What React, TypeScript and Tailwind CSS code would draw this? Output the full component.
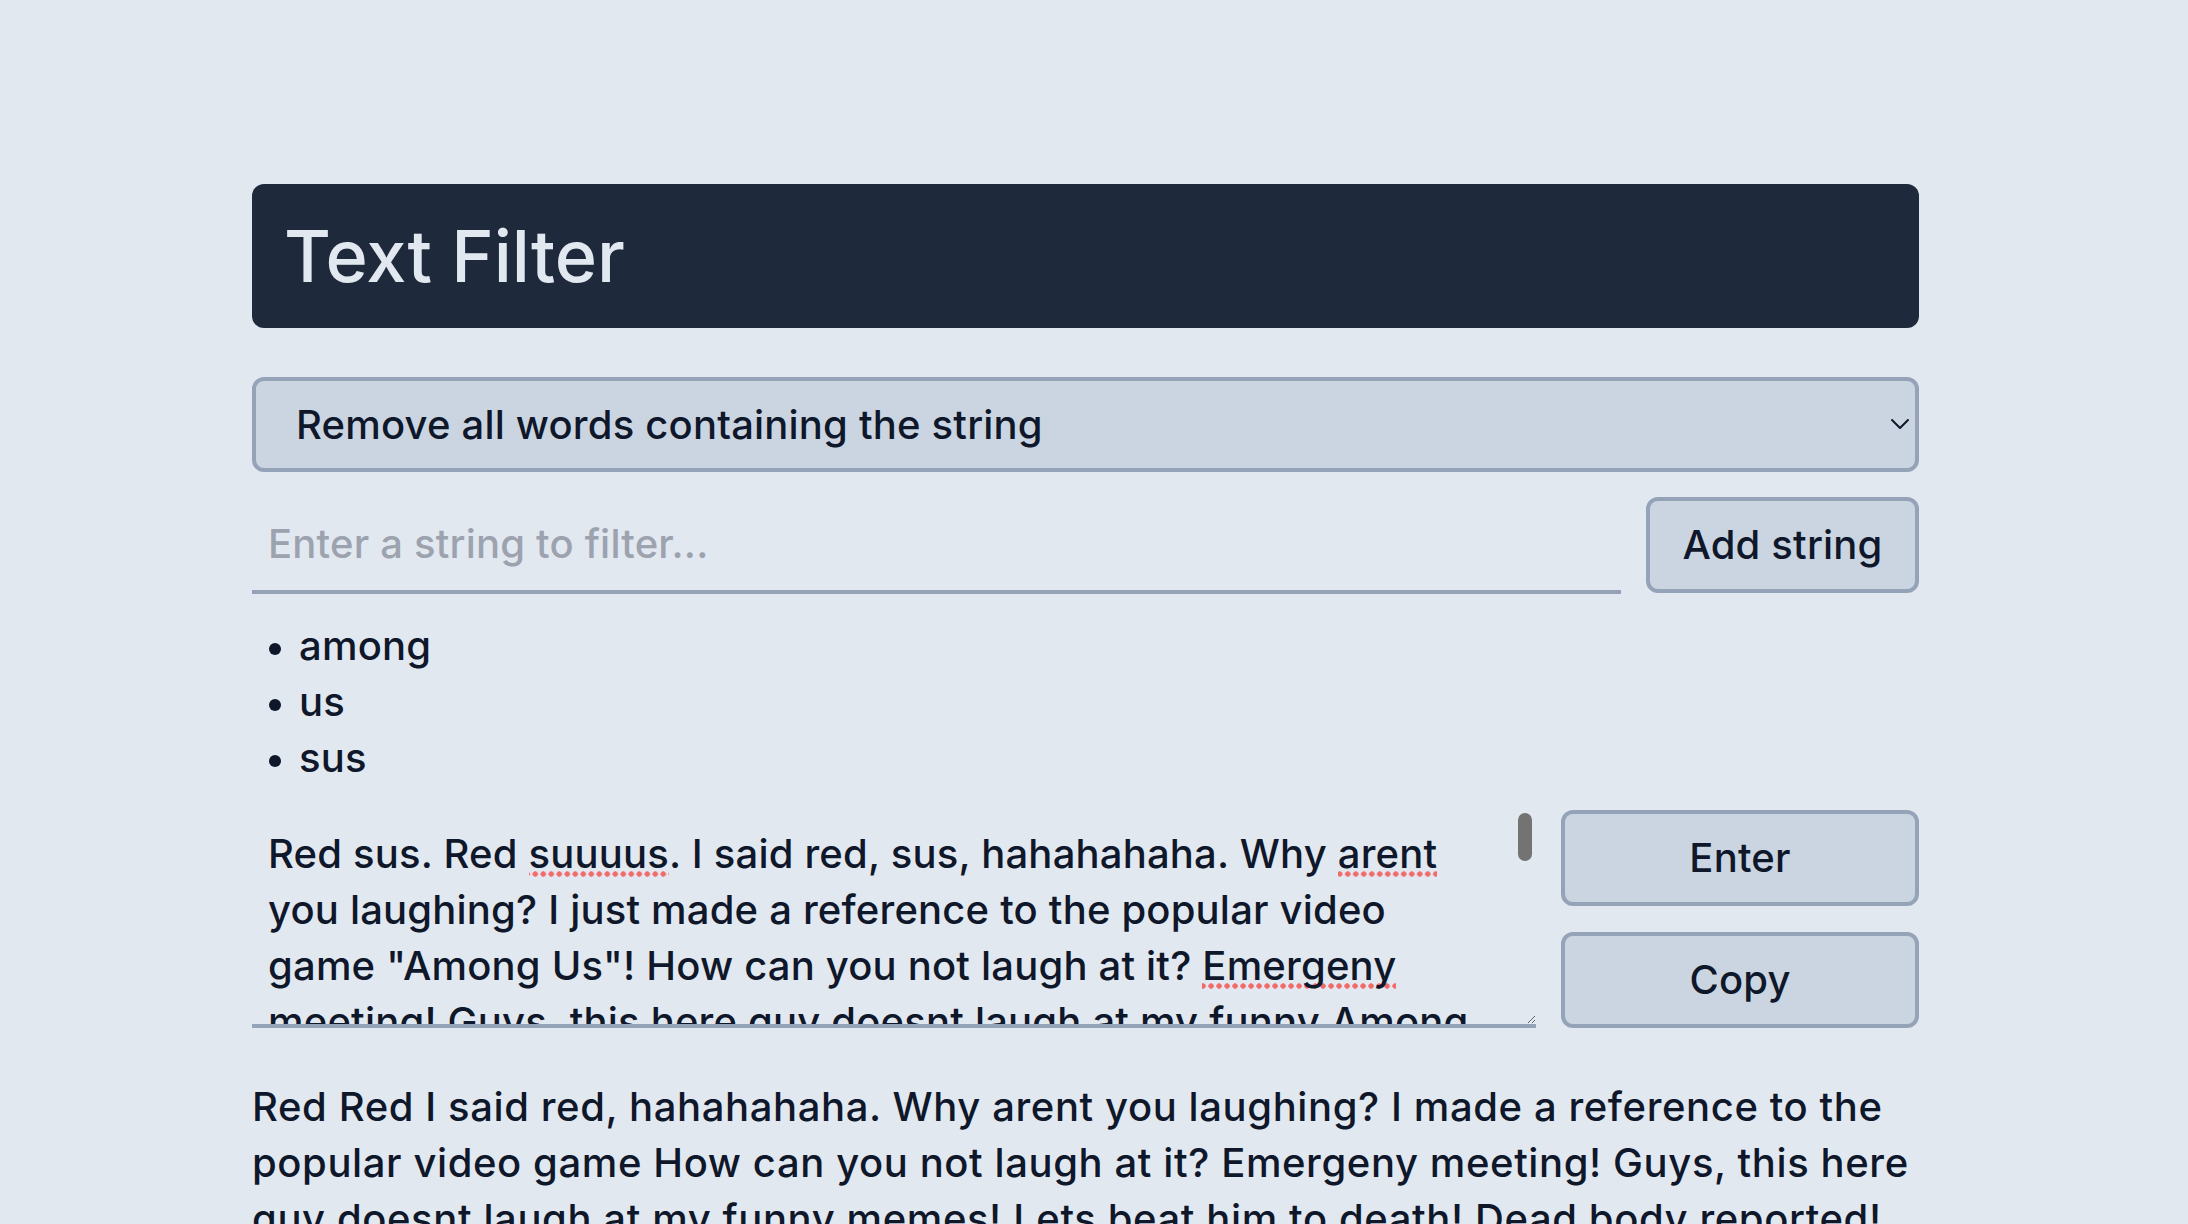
import React from "react";

const Bad = ({ children }: { children: React.ReactNode }) => (
  <span className="bg-[radial-gradient(circle,#f26a6a_2.4px,transparent_3px)] bg-[length:8px_8px] bg-bottom bg-repeat-x">
    {children}
  </span>
);

export default function App() {
  const items = ["among", "us", "sus"];
  return (
    <div className="min-h-screen bg-[#e2e8f0] font-['Inter','Open_Sans',sans-serif] font-medium text-[#0f172a] tracking-[0.012em]">
      <div className="ml-[252px] w-[1667px] pt-[184px] pb-[80px]">
        <header className="rounded-[12px] bg-[#1e293b] px-[32px] py-[32px]">
          <h1 className="text-[72px] leading-[80px] font-medium tracking-normal text-[#e2e8f0]">Text Filter</h1>
        </header>

        <div className="relative mt-[49px]">
          <select className="block h-[95px] w-full appearance-none rounded-[12px] border-4 border-[#94a3b8] bg-[#cbd5e1] pl-[40px] pr-[60px] text-[40px] leading-[56px] text-[#0f172a] outline-none">
            <option>Remove all words containing the string</option>
          </select>
          <svg
            className="pointer-events-none absolute right-[9px] top-[41px]"
            width="20"
            height="12"
            viewBox="0 0 20 12"
            fill="none"
          >
            <path d="M2 2 L10 10 L18 2" stroke="#0f172a" strokeWidth="2" strokeLinecap="round" strokeLinejoin="round" />
          </svg>
        </div>

        <div className="mt-[25px] flex items-stretch gap-[25px]">
          <input
            className="h-[97px] flex-1 border-b-4 border-[#94a3b8] bg-transparent px-[16px] text-[40px] leading-[56px] text-[#0f172a] outline-none placeholder:text-[#9ca3af]"
            placeholder="Enter a string to filter..."
          />
          <button className="h-[96px] w-[273px] rounded-[12px] border-4 border-[#94a3b8] bg-[#cbd5e1] text-[40px] leading-[56px] text-[#0f172a]">
            Add string
          </button>
        </div>

        <ul className="mt-[24px] flex flex-col">
          {items.map((it) => (
            <li key={it} className="flex items-center text-[40px] leading-[56px]">
              <span className="ml-[17px] mr-[18px] mt-[6px] h-[12px] w-[12px] rounded-full bg-[#0f172a]" />
              <span>{it}</span>
            </li>
          ))}
        </ul>

        <div className="mt-[24px] flex gap-[25px]">
          <div className="relative flex-1">
            <div className="h-[218px] resize-y overflow-hidden border-b-4 border-[#94a3b8] pb-[16px] pl-[16px] pr-[36px] pt-[16px] text-[40px] leading-[56px]">
              Red sus. Red <Bad>suuuus</Bad>. I said red, sus, hahahahaha. Why <Bad>arent</Bad> you laughing? I just made
              a reference to the popular video game "Among Us"! How can you not laugh at it? <Bad>Emergeny</Bad> meeting!
              Guys, this here guy <Bad>doesnt</Bad> laugh at my funny Among Us memes! <Bad>Lets</Bad> beat him to death!
              Dead body reported!
            </div>
            <div className="pointer-events-none absolute right-[4px] top-[3px] h-[48px] w-[14px] rounded-full bg-[#737373]" />
          </div>
          <div className="flex w-[358px] flex-col gap-[26px]">
            <button className="h-[96px] rounded-[12px] border-4 border-[#94a3b8] bg-[#cbd5e1] text-[40px] leading-[56px] text-[#0f172a]">
              Enter
            </button>
            <button className="h-[96px] rounded-[12px] border-4 border-[#94a3b8] bg-[#cbd5e1] text-[40px] leading-[56px] text-[#0f172a]">
              Copy
            </button>
          </div>
        </div>

        <p className="mt-[51px] text-[40px] leading-[56px] tracking-[0.015em]">
          Red Red I said red, hahahahaha. Why arent you laughing? I made a reference to the popular video game How can you
          not laugh at it? Emergeny meeting! Guys, this here guy doesnt laugh at my funny memes! Lets beat him to death! Dead
          body reported!
        </p>
      </div>
    </div>
  );
}
